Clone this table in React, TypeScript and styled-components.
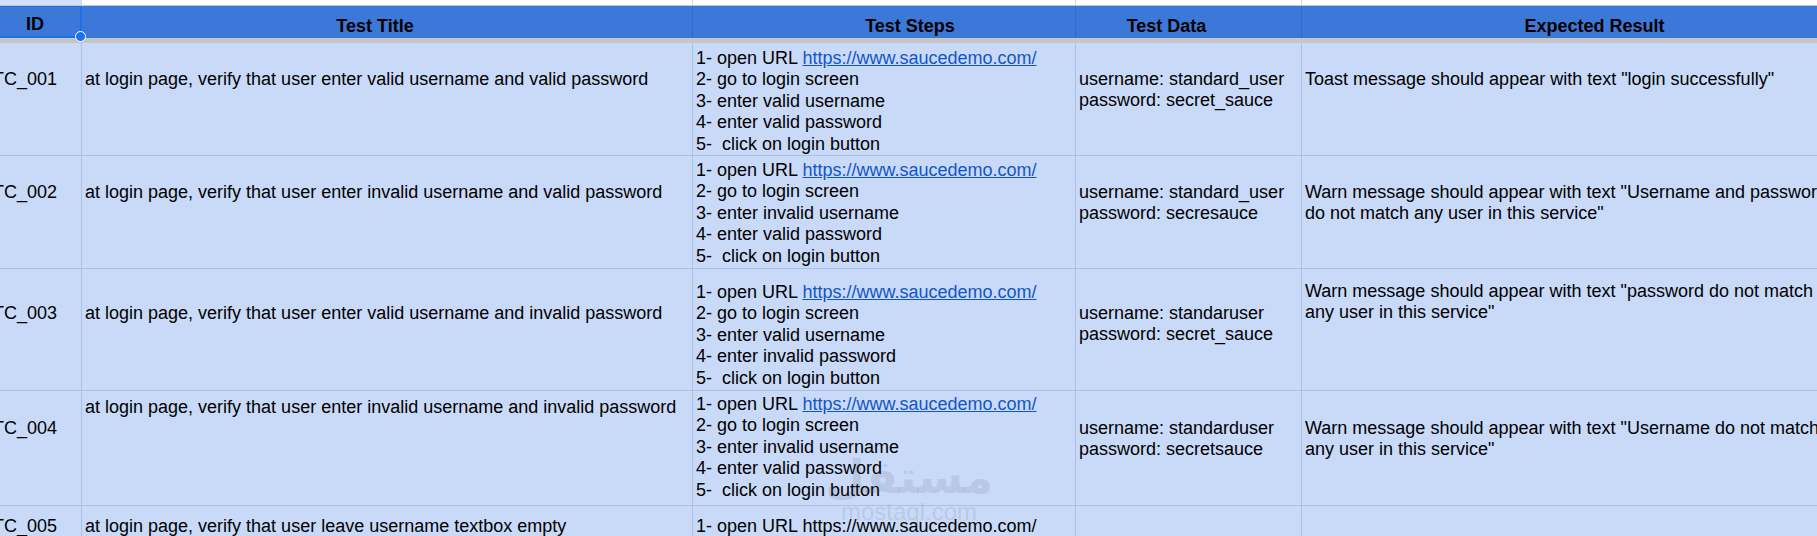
import React from 'react';
import styled, { createGlobalStyle } from 'styled-components';

const GlobalStyle = createGlobalStyle`
  html, body { margin: 0; padding: 0; background: #ffffff; overflow: hidden; }
  body { font-family: "Liberation Sans", Arial, sans-serif; color: #000; }
`;

const COLS = '92px 611px 383px 226px 586px';

const Sheet = styled.div`
  position: relative;
  width: 1817px;
  height: 536px;
  overflow: hidden;
`;

const Grid = styled.div`
  margin-left: -10px;
  width: max-content;
`;

const StripRow = styled.div`
  display: grid;
  grid-template-columns: ${COLS};
  height: 6px;
`;

const StripCell = styled.div<{ $tint?: boolean }>`
  box-sizing: border-box;
  background: ${(p) => (p.$tint ? '#d3e2fa' : '#ffffff')};
  border-right: 1px solid #d4d4d4;
  border-bottom: 1px solid #bfc6d2;
`;

const HeaderRow = styled.div`
  display: grid;
  grid-template-columns: ${COLS};
  height: 32px;
`;

const HeaderCell = styled.div<{ $shift?: number; $selected?: boolean }>`
  box-sizing: border-box;
  display: flex;
  align-items: flex-end;
  justify-content: center;
  background: #3c78d8;
  border-right: 1px solid #3469c4;
  font-weight: 700;
  font-size: 18px;
  line-height: 21.4px;
  padding-bottom: 1px;
  padding-left: ${(p) => ((p.$shift ?? 0) > 0 ? (p.$shift ?? 0) * 2 : 0)}px;
  padding-right: ${(p) => ((p.$shift ?? 0) < 0 ? -(p.$shift ?? 0) * 2 : 0)}px;
  ${(p) =>
    p.$selected
      ? `border: 2px solid #1a73e8; border-left: none; border-top-width: 1px;`
      : ''}
`;

const FreezeBar = styled.div`
  height: 5px;
  background: #c6c6c6;
`;

const Row = styled.div<{ $h: number }>`
  display: grid;
  grid-template-columns: ${COLS};
  height: ${(p) => p.$h}px;
`;

const Cell = styled.div<{ $top: number }>`
  box-sizing: border-box;
  background: #c9daf8;
  border-right: 1px solid #abc0e6;
  border-bottom: 1px solid #abc0e6;
  padding: ${(p) => p.$top}px 3px 0 3px;
  font-size: 18px;
  line-height: 21.4px;
  white-space: pre;
  overflow: hidden;
`;

const Line = styled.div``;

const Link = styled.a`
  color: #1155cc;
  text-decoration: underline;
`;

const Watermark = styled.div`
  position: absolute;
  left: 838px;
  top: 450px;
  width: 142px;
  display: flex;
  flex-direction: column;
  align-items: center;
  color: rgba(80, 80, 90, 0.14);
  pointer-events: none;
`;

const WatermarkArabic = styled.div`
  font-family: "DejaVu Sans", sans-serif;
  font-weight: 700;
  font-size: 46px;
  line-height: 54px;
`;

const WatermarkLatin = styled.div`
  font-family: "Liberation Sans", Arial, sans-serif;
  font-size: 24px;
  line-height: 22px;
  margin-top: -3px;
`;

const Handle = styled.div`
  position: absolute;
  left: 75px;
  top: 31px;
  width: 9px;
  height: 9px;
  border-radius: 50%;
  background: #1a73e8;
  border: 1.5px solid #ffffff;
`;

type RowData = {
  h: number;
  id: string;
  title: string;
  steps: string[];
  link: boolean;
  data: string[];
  expected: string[];
  pad: [number, number, number, number, number];
};

const URL = 'https://www.saucedemo.com/';

const rows: RowData[] = [
  {
    h: 113,
    id: 'TC_001',
    title: 'at login page, verify that user enter valid username and valid password',
    steps: ['2- go to login screen', '3- enter valid username', '4- enter valid password', '5-  click on login button'],
    link: true,
    data: ['username: standard_user', 'password: secret_sauce'],
    expected: ['Toast message should appear with text "login successfully"'],
    pad: [26, 26, 5, 26, 26],
  },
  {
    h: 113,
    id: 'TC_002',
    title: 'at login page, verify that user enter invalid username and valid password',
    steps: ['2- go to login screen', '3- enter invalid username', '4- enter valid password', '5-  click on login button'],
    link: true,
    data: ['username: standard_user', 'password: secresauce'],
    expected: ['Warn message should appear with text "Username and password', 'do not match any user in this service"'],
    pad: [26, 26, 4, 26, 26],
  },
  {
    h: 122,
    id: 'TC_003',
    title: 'at login page, verify that user enter valid username and invalid password',
    steps: ['2- go to login screen', '3- enter valid username', '4- enter invalid password', '5-  click on login button'],
    link: true,
    data: ['username: standaruser', 'password: secret_sauce'],
    expected: ['Warn message should appear with text "password do not match', 'any user in this service"'],
    pad: [34, 34, 13, 34, 12],
  },
  {
    h: 115,
    id: 'TC_004',
    title: 'at login page, verify that user enter invalid username and invalid password',
    steps: ['2- go to login screen', '3- enter invalid username', '4- enter valid password', '5-  click on login button'],
    link: true,
    data: ['username: standarduser', 'password: secretsauce'],
    expected: ['Warn message should appear with text "Username do not match', 'any user in this service"'],
    pad: [27, 6, 3, 27, 27],
  },
  {
    h: 113,
    id: 'TC_005',
    title: 'at login page, verify that user leave username textbox empty',
    steps: [],
    link: false,
    data: [],
    expected: [],
    pad: [10, 10, 10, 10, 10],
  },
];

const headers: { label: string; shift: number }[] = [
  { label: 'ID', shift: 0 },
  { label: 'Test Title', shift: -12 },
  { label: 'Test Steps', shift: 26 },
  { label: 'Test Data', shift: -22 },
  { label: 'Expected Result', shift: 0 },
];

export default function App() {
  return (
    <>
      <GlobalStyle />
      <Sheet>
        <Grid>
          <StripRow>
            {headers.map((h, i) => (
              <StripCell key={h.label} $tint={i === 0} />
            ))}
          </StripRow>
          <HeaderRow>
            {headers.map((h, i) => (
              <HeaderCell key={h.label} $shift={h.shift} $selected={i === 0}>
                {h.label}
              </HeaderCell>
            ))}
          </HeaderRow>
          <FreezeBar />
          {rows.map((r) => (
            <Row key={r.id} $h={r.h}>
              <Cell $top={r.pad[0]}>{r.id}</Cell>
              <Cell $top={r.pad[1]}>{r.title}</Cell>
              <Cell $top={r.pad[2]}>
                {r.link ? (
                  <Line>
                    1- open URL <Link href="#">{URL}</Link>
                  </Line>
                ) : (
                  <Line>1- open URL {URL}</Line>
                )}
                {r.steps.map((s) => (
                  <Line key={s}>{s}</Line>
                ))}
              </Cell>
              <Cell $top={r.pad[3]}>
                {r.data.map((s) => (
                  <Line key={s}>{s}</Line>
                ))}
              </Cell>
              <Cell $top={r.pad[4]}>
                {r.expected.map((s) => (
                  <Line key={s}>{s}</Line>
                ))}
              </Cell>
            </Row>
          ))}
        </Grid>
        <Handle />
        <Watermark>
          <WatermarkArabic>مستقل</WatermarkArabic>
          <WatermarkLatin>mostaql.com</WatermarkLatin>
        </Watermark>
      </Sheet>
    </>
  );
}
